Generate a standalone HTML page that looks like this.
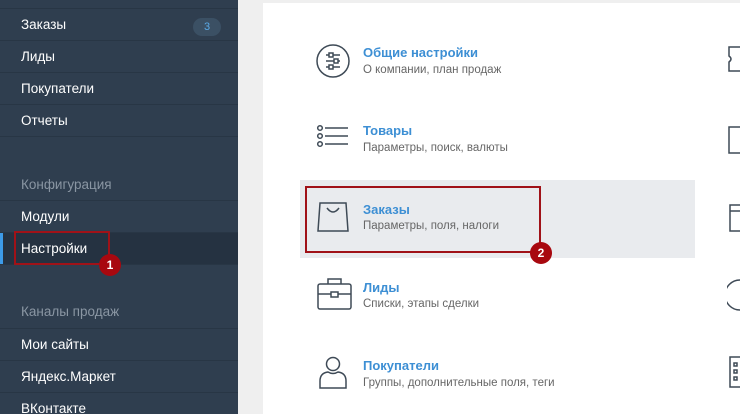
<!DOCTYPE html>
<html style="margin:0;width:740px;height:414px;overflow:hidden;background:#efefef"><head><meta charset="utf-8"><style>
body{margin:0;width:740px;height:414px;overflow:hidden;background:#efefef;font-family:"Liberation Sans","DejaVu Sans",sans-serif;position:relative}
#sb{position:absolute;left:0;top:0;width:238px;height:414px;background:#2f3e4f}
.it{position:absolute;left:0;width:238px;height:32px;border-top:1px solid #283645;color:#fff;font-size:13.5px;line-height:32px;padding-left:21px;box-sizing:border-box}
.hd{position:absolute;left:21px;color:#8a96a3;font-size:13.5px}
#main{position:absolute;left:263px;top:3px;width:477px;height:411px;background:#fff}
.ic{position:absolute;left:316px}
.t{position:absolute;left:363px;color:#3d8fd4;font-weight:bold;font-size:13px}
.s{position:absolute;left:363px;color:#666;font-size:11.5px}
.badge{position:absolute;width:22px;height:22px;border-radius:50%;background:#a8080f;color:#fff;font-weight:bold;font-size:12px;text-align:center;line-height:22px}
.rb{position:absolute;border:2px solid #a01218;box-sizing:border-box}
svg{fill:none;stroke:#3e4a56;stroke-width:1.5}
</style></head><body>
<div id="sb">
<div class="it" style="top:8px">Заказы<span style="position:absolute;left:193px;top:9px;width:28px;height:18px;border-radius:9px;background:#3b5064;color:#5aa9e6;font-size:11px;line-height:18px;text-align:center">3</span></div>
<div class="it" style="top:40px">Лиды</div>
<div class="it" style="top:72px">Покупатели</div>
<div class="it" style="top:104px">Отчеты</div>
<div class="it" style="top:136px;height:1px"></div>
<div class="hd" style="top:177px">Конфигурация</div>
<div class="it" style="top:200px">Модули</div>
<div class="it" style="top:232px;background:#253241">Настройки</div>
<div style="position:absolute;left:0;top:233px;width:3px;height:31px;background:#3d9be8"></div>
<div class="it" style="top:264px;height:1px"></div>
<div class="hd" style="top:304px">Каналы продаж</div>
<div class="it" style="top:328px">Мои сайты</div>
<div class="it" style="top:360px">Яндекс.Маркет</div>
<div class="it" style="top:392px">ВКонтакте</div>
</div>
<div id="main"></div>
<div style="position:absolute;left:300px;top:180px;width:395px;height:78px;background:#e9ebee"></div>

<svg class="ic" style="top:43px" width="36" height="36"><circle cx="17" cy="18" r="16"/><path d="M10 12h14M10 18h14M10 24h14"/><rect x="13" y="10" width="4" height="4" fill="#fff"/><rect x="18" y="16" width="4" height="4" fill="#fff"/><rect x="13" y="22" width="4" height="4" fill="#fff"/></svg>
<div class="t" style="top:45px">Общие настройки</div><div class="s" style="top:64px">О компании, план продаж</div>

<svg class="ic" style="top:124px" width="36" height="30"><circle cx="4" cy="4" r="2.3"/><circle cx="4" cy="12" r="2.3"/><circle cx="4" cy="20" r="2.3"/><path d="M9 4h23M9 12h23M9 20h23"/></svg>
<div class="t" style="top:123px">Товары</div><div class="s" style="top:142px">Параметры, поиск, валюты</div>

<svg class="ic" style="top:200px" width="36" height="34"><path d="M4 3h26l2 28H2z"/><path d="M11 8q6 8 12 0"/></svg>
<div class="t" style="top:202px">Заказы</div><div class="s" style="top:220px">Параметры, поля, налоги</div>

<svg class="ic" style="top:276px" width="40" height="36"><rect x="2" y="8" width="33" height="25" rx="2"/><path d="M12 8V3h13v5M2 18h33"/><rect x="15" y="16" width="7" height="5" fill="#fff"/></svg>
<div class="t" style="top:280px">Лиды</div><div class="s" style="top:298px">Списки, этапы сделки</div>

<svg class="ic" style="top:355px" width="36" height="36"><circle cx="17" cy="9" r="6.5"/><path d="M4 33v-7q0-8 8-9q5 3 10 0q8 1 8 9v7z"/></svg>
<div class="t" style="top:358px">Покупатели</div><div class="s" style="top:377px">Группы, дополнительные поля, теги</div>

<svg style="position:absolute;left:727px;top:45px" width="13" height="36"><path d="M13 2H2v9q4 3 0 6v9h11"/></svg>
<svg style="position:absolute;left:727px;top:125px" width="13" height="30"><path d="M13 2H2v26h11"/></svg>
<svg style="position:absolute;left:727px;top:203px" width="13" height="30"><path d="M13 2H3v26h10M3 8h10"/></svg>
<svg style="position:absolute;left:727px;top:278px" width="13" height="34"><path d="M13 2a15 15 0 0 0 0 30"/></svg>
<svg style="position:absolute;left:727px;top:355px" width="13" height="36"><path d="M13 2H3v30h10"/><rect x="7" y="8" width="3" height="3"/><rect x="7" y="15" width="3" height="3"/><rect x="7" y="22" width="3" height="3"/></svg>

<div class="rb" style="left:14px;top:231px;width:96px;height:34px"></div>
<div class="badge" style="left:99px;top:254px">1</div>
<div class="rb" style="left:305px;top:186px;width:236px;height:67px"></div>
<div class="badge" style="left:530px;top:242px">2</div>
</body></html>
